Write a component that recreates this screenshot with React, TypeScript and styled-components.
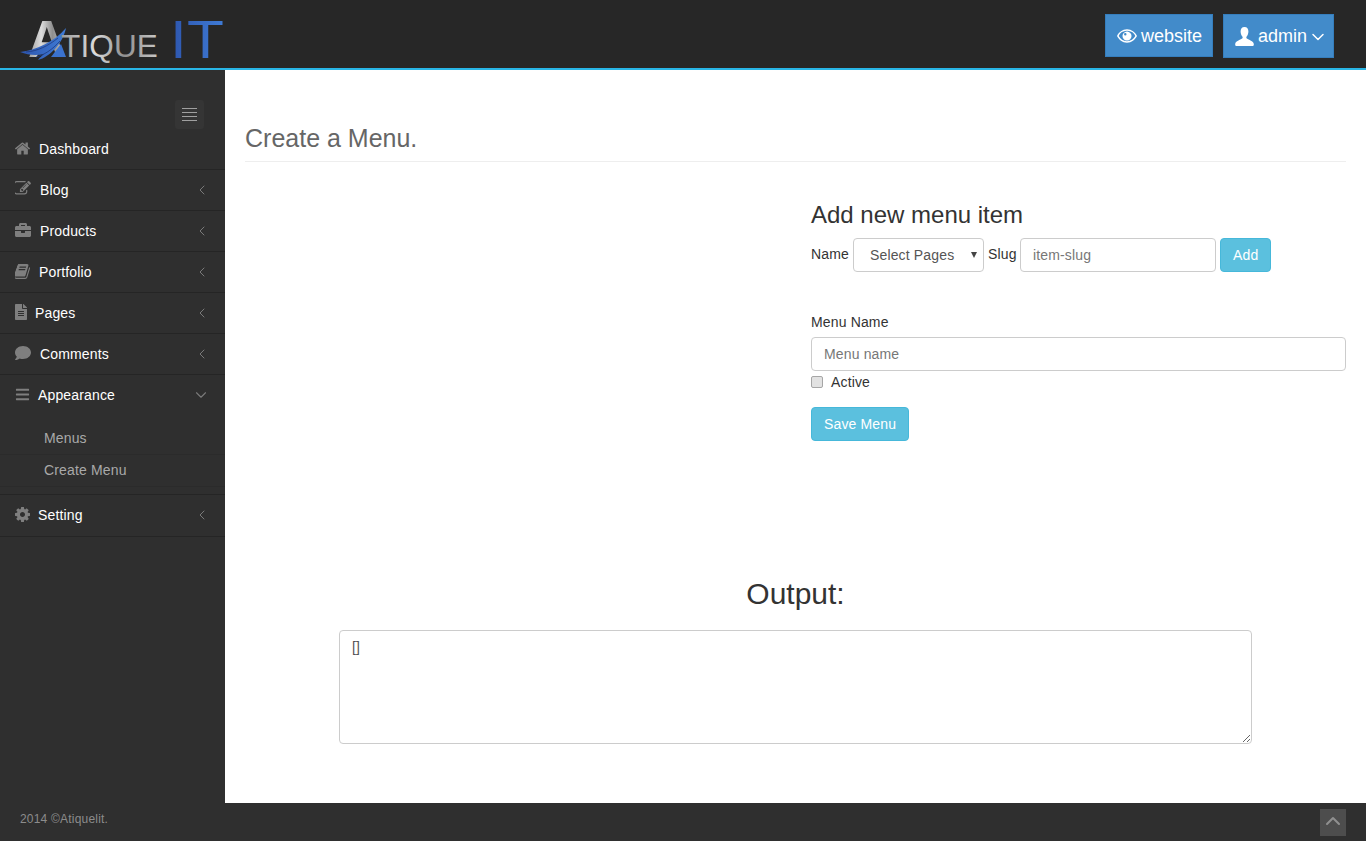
import React from "react";
import styled, { createGlobalStyle } from "styled-components";
import { FaBriefcase, FaFileAlt, FaComment, FaBars } from "react-icons/fa";
import { ChevronLeft, ChevronDown, ChevronUp } from "lucide-react";

const GlobalStyle = createGlobalStyle`
  html, body {
    margin: 0;
    padding: 0;
    background: #fff;
    font-family: "Liberation Sans", Arial, sans-serif;
    font-size: 14px;
    letter-spacing: 0.15px;
    color: #333;
  }
  * {
    box-sizing: border-box;
  }
`;

const Page = styled.div`
  display: flex;
  flex-direction: column;
  height: 841px;
  overflow: hidden;
`;

const Header = styled.header`
  flex: 0 0 70px;
  display: flex;
  justify-content: space-between;
  background: #272727;
  border-bottom: 2px solid #29b6e6;
  padding: 14px 32px 0 20px;
`;

const LogoSvg = styled.svg`
  display: block;
  margin-top: 5px;
  overflow: visible;
`;

const HeaderActions = styled.div`
  display: flex;
  align-items: flex-start;
  gap: 10px;
`;

const HeaderButton = styled.a<{ $w: number; $h: number }>`
  display: flex;
  align-items: center;
  gap: 4px;
  width: ${(p) => p.$w}px;
  height: ${(p) => p.$h}px;
  padding: 1px 0 0 11px;
  background: #428bca;
  border: 1px solid #357ebd;
  color: #fff;
  font-size: 18px;
  letter-spacing: 0;
`;

const AdminCaret = styled(ChevronDown)`
  margin-left: -3px;
`;

const Body = styled.div`
  flex: 1;
  display: flex;
  min-height: 0;
`;

const Sidebar = styled.aside`
  flex: 0 0 225px;
  background: #2f2f2f;
  padding-top: 30px;
`;

const ToggleRow = styled.div`
  display: flex;
  justify-content: flex-end;
  padding-right: 21px;
`;

const Toggle = styled.div`
  width: 29px;
  height: 29px;
  background: #353535;
  border-radius: 3px;
  display: flex;
  flex-direction: column;
  justify-content: center;
  align-items: center;
  gap: 3px;
  span {
    display: block;
    width: 15px;
    height: 1px;
    background: #a0a0a0;
  }
`;

const NavList = styled.ul`
  list-style: none;
  margin: 0;
  padding: 0;
`;

const NavItem = styled.li`
  border-bottom: 1px solid #252525;
  &:last-child {
    padding-bottom: 1px;
  }
`;

const NavRow = styled.div`
  height: 40px;
  display: flex;
  align-items: center;
  padding: 0 15px;
  color: #fff;
`;

const NavIcon = styled.span<{ $slot: number; $size: number }>`
  flex: 0 0 ${(p) => p.$slot}px;
  display: flex;
  align-items: center;
  color: #7f7f7f;
  font-size: ${(p) => p.$size}px;
  margin-top: -2px;
`;

const NavLabel = styled.span`
  flex: 1;
`;

const NavArrow = styled.span`
  display: flex;
  color: #7a7a7a;
`;

const SubList = styled.ul`
  list-style: none;
  margin: 0;
  padding: 8px 0 7px;
`;

const SubItem = styled.li`
  height: 32px;
  line-height: 31px;
  padding-left: 44px;
  color: #a9a9a9;
  border-bottom: 1px solid #2b2b2b;
`;

const Main = styled.main`
  flex: 1;
  background: #fff;
  padding: 20px 20px 0;
  min-width: 0;
`;

const PageTitle = styled.h3`
  margin: 33px 0 40px;
  height: 39px;
  font-size: 25px;
  line-height: 30px;
  font-weight: 400;
  letter-spacing: 0;
  color: #666;
  border-bottom: 1px solid #eee;
`;

const Columns = styled.div`
  display: grid;
  grid-template-columns: 1fr 1fr;
  column-gap: 30px;
  height: 375px;
`;

const FormColumn = styled.div`
  grid-column: 2;
  padding-left: 0.5px;
`;

const SectionTitle = styled.h3`
  margin: 0 0 10px;
  font-size: 24px;
  line-height: 26px;
  font-weight: 400;
  letter-spacing: 0;
  color: #333;
`;

const InlineForm = styled.div`
  display: flex;
  align-items: flex-start;
  gap: 4px;
  height: 74px;
`;

const InlineLabel = styled.label<{ $w: number }>`
  flex: 0 0 ${(p) => p.$w}px;
  min-width: 0;
  white-space: nowrap;
  line-height: 32px;
`;

const SelectWrap = styled.div`
  position: relative;
  width: 131px;
  height: 34px;
  &::after {
    content: "";
    position: absolute;
    right: 7px;
    top: 14px;
    border-left: 3px solid transparent;
    border-right: 3px solid transparent;
    border-top: 6px solid #444;
    pointer-events: none;
  }
`;

const Select = styled.select`
  appearance: none;
  display: block;
  width: 100%;
  height: 34px;
  padding: 6px 12px 6px 16px;
  font: inherit;
  letter-spacing: inherit;
  color: #555;
  background: #fff;
  border: 1px solid #ccc;
  border-radius: 4px;
`;

const Input = styled.input<{ $w?: number }>`
  display: block;
  width: ${(p) => (p.$w ? `${p.$w}px` : "100%")};
  height: 34px;
  padding: 6px 12px;
  font: inherit;
  letter-spacing: inherit;
  color: #555;
  background: #fff;
  border: 1px solid #ccc;
  border-radius: 4px;
  &::placeholder {
    color: #777;
  }
`;

const InfoButton = styled.button`
  height: 34px;
  padding: 6px 12px;
  font: inherit;
  letter-spacing: inherit;
  color: #fff;
  background: #5bc0de;
  border: 1px solid #46b8da;
  border-radius: 4px;
`;

const FieldLabel = styled.label`
  display: block;
  line-height: 20px;
  margin-bottom: 5px;
`;

const CheckRow = styled.label`
  display: flex;
  align-items: center;
  gap: 8px;
  height: 22px;
  margin-bottom: 14px;
`;

const CheckBox = styled.input`
  appearance: none;
  margin: 0;
  width: 12px;
  height: 12px;
  background: #e2e2e2;
  border: 1px solid #a6a6a6;
  border-radius: 2px;
`;

const OutputSection = styled.section`
  text-align: center;
`;

const OutputTitle = styled.h2`
  margin: 0 0 20px;
  font-size: 30px;
  line-height: 33px;
  font-weight: 400;
  letter-spacing: 0;
  color: #333;
`;

const OutputArea = styled.textarea`
  display: block;
  width: 913px;
  height: 114px;
  margin: 0 auto;
  padding: 6px 12px;
  font: inherit;
  line-height: 20px;
  color: #555;
  background: #fff;
  border: 1px solid #ccc;
  border-radius: 4px;
`;

const Footer = styled.footer`
  flex: 0 0 38px;
  display: flex;
  justify-content: space-between;
  align-items: flex-start;
  background: #2f2f2f;
  padding: 6px 20px 0;
  color: #8c8c8c;
  font-size: 12px;
  letter-spacing: 0.2px;
`;

const FooterText = styled.span`
  margin-top: 1px;
  line-height: 18px;
`;

const BackTop = styled.a`
  width: 26px;
  height: 27px;
  padding-bottom: 3px;
  display: flex;
  align-items: center;
  justify-content: center;
  background: #4d4d4d;
  color: #8f8f8f;
`;

function Logo() {
  return (
    <LogoSvg width="206" height="40" viewBox="0 0 206 40">
      <defs>
        <linearGradient id="silver" x1="0" y1="0" x2="1" y2="0">
          <stop offset="0" stopColor="#9a9a9a" />
          <stop offset="0.35" stopColor="#dcdcdc" />
          <stop offset="0.65" stopColor="#8f8f8f" />
          <stop offset="1" stopColor="#c8c8c8" />
        </linearGradient>
        <linearGradient id="logoBlue" x1="0" y1="0" x2="1" y2="0">
          <stop offset="0" stopColor="#2d55ad" />
          <stop offset="1" stopColor="#3f7bd6" />
        </linearGradient>
      </defs>
      <text x="8" y="38" fontFamily="Liberation Sans" fontWeight="700" fontSize="52" fill="url(#silver)">
        A
      </text>
      <path d="M0 33 C16 31 34 23 46 9 C43 24 30 38 18 41 C20 38 22 37 24 35 C16 37 8 36 0 33Z" fill="url(#logoBlue)" />
      <path d="M6 33 C18 32 28 27 38 19 M16 38 C24 36 32 31 40 22" fill="none" stroke="#1f3a7d" strokeWidth="0.8" />
      <path d="M31 38 L41 25 L46 38Z" fill="#3a72cf" />
      <text x="41" y="38" fontSize="32" fontFamily="Liberation Sans" textLength="97" lengthAdjust="spacingAndGlyphs" fill="url(#silver)">
        TIQUE
      </text>
      <text x="150" y="39" fontSize="53" fontFamily="Liberation Sans" textLength="54" lengthAdjust="spacingAndGlyphs" fill="url(#logoBlue)">
        IT
      </text>
    </LogoSvg>
  );
}

function EyeIcon() {
  return (
    <svg width="20" height="14" viewBox="0 0 21 14" fill="#fff" fillRule="evenodd">
      <path d="M10.500 0C5.600 0 2 3.200 0 7c2 3.800 5.600 7 10.500 7S19 10.800 21 7C19 3.200 15.400 0 10.500 0ZM10.500 1.500C7.600 1.500 5.400 2.500 3.900 3.800 3.300 4.300 2.700 5 1.800 7c1.700 3 4.700 5.500 8.700 5.500S17.500 10 19.200 7C18.300 5 17.700 4.300 17.100 3.800 15.600 2.500 13.400 1.500 10.500 1.500Z" />
      <path d="M10.500 2.300a4.700 4.700 0 1 0 .01 0ZM8.700 3.800a1.300 1.300 0 1 1-.01 2.600 1.300 1.300 0 0 1 .01-2.600Z" />
    </svg>
  );
}

function UserIcon() {
  return (
    <svg width="19" height="19" viewBox="0 0 19 19" fill="#fff">
      <path d="M9.500 0C6.800 0 5.600 2 5.600 4.600c0 2.200.8 4 1.900 5.100.3.600.2 1.400-.4 1.900C5.200 13.200.6 14 .2 17c-.1.800.2 2 .8 2h17c.6 0 .9-1.200.8-2-.4-3-5-3.800-6.900-5.400-.6-.5-.7-1.300-.4-1.900 1.100-1.100 1.900-2.900 1.900-5.100C13.400 2 12.200 0 9.500 0Z" />
    </svg>
  );
}

// Font Awesome 4 glyphs, the v5 ones in react-icons are drawn differently
function Fa4({ box, d }: { box: string; d: string }) {
  return (
    <svg width="1em" height="1em" viewBox={box} fill="currentColor">
      <path d={d} />
    </svg>
  );
}

const homePath =
  "M1472 992v480q0 26-19 45t-45 19h-384v-384h-256v384h-384q-26 0-45-19t-19-45v-480q0-1 .5-3t.5-3l575-474 575 474q1 2 1 6zm223-69l-62 74q-8 9-21 11h-3q-13 0-21-7l-692-577-692 577q-12 8-24 7-13-2-21-11l-62-74q-8-10-7-23.500t11-21.500l719-599q32-26 76-26t76 26l244 204v-195q0-14 9-23t23-9h192q14 0 23 9t9 23v408l219 182q10 8 11 21.500t-7 23.500z";
const editPath =
  "M888 1184l116-116-152-152-116 116v56h96v96h56zm440-720q-16-16-33 1l-350 350q-17 17-1 33t33-1l350-350q17-17 1-33zm80 594v190q0 119-84.500 203.500t-203.500 84.500h-832q-119 0-203.500-84.500t-84.500-203.500v-832q0-119 84.500-203.500t203.500-84.500h832q63 0 117 25 15 7 18 23 3 17-9 29l-49 49q-14 14-32 8-23-6-45-6h-832q-66 0-113 47t-47 113v832q0 66 47 113t113 47h832q66 0 113-47t47-113v-126q0-13 9-22l64-64q15-15 35-7t20 29zm-96-738l288 288-672 672h-288v-288zm444 132l-92 92-288-288 92-92q28-28 68-28t68 28l152 152q28 28 28 68t-28 68z";
const bookPath =
  "M1639 478q40 57 18 129l-275 906q-19 64-76.500 107.500t-122.500 43.500h-923q-77 0-148.500-53.500t-99.500-131.500q-24-67-2-127 0-4 3-27t4-37q1-8-3-21.500t-3-19.500q2-11 8-21t16.500-23.500 16.500-23.500q23-38 45-91.500t30-91.500q3-10 .5-30t-.5-28q3-11 17-28t17-23q21-36 42-92t25-90q1-9-2.500-32t.5-28q4-13 22-30.500t22-22.500q19-26 42.500-84.500t27.500-96.500q1-8-3-25.500t-2-26.500q2-8 9-18t18-23 17-21q8-12 16.500-30.500t15-35 16-36 19.500-32 26.500-23.500 36-11.500 47.500 5.500l-1 3q38-9 51-9h761q74 0 114 56t18 130l-274 906q-36 119-71.500 153.500t-128.500 34.500h-869q-27 0-38 15-11 16-1 43 24 70 144 70h923q29 0 56-15.500t35-41.500l300-987q7-22 5-57 38 15 59 43zm-1064 2q-4 13 2 22.500t20 9.500h608q13 0 25.500-9.500t16.500-22.500l21-64q4-13-2-22.500t-20-9.500h-608q-13 0-25.500 9.500t-16.500 22.500zm-83 256q-4 13 2 22.500t20 9.500h608q13 0 25.500-9.500t16.500-22.500l21-64q4-13-2-22.500t-20-9.500h-608q-13 0-25.500 9.500t-16.500 22.500z";
const cogPath =
  "M1152 896q0-106-75-181t-181-75-181 75-75 181 75 181 181 75 181-75 75-181zm512-109v222q0 12-8 23t-20 13l-185 28q-19 54-39 91 35 50 107 138 10 12 10 25t-9 23q-27 37-99 108t-94 71q-12 0-26-9l-138-108q-44 23-91 38-16 136-29 186-7 28-36 28h-222q-14 0-24.500-8.500t-11.500-21.500l-28-184q-49-16-90-37l-141 107q-10 9-25 9-14 0-25-11-126-114-165-168-7-10-7-23 0-12 8-23 15-21 51-66.500t54-70.500q-27-50-41-99l-183-27q-13-2-21-12.500t-8-23.500v-222q0-12 8-23t19-13l186-28q14-46 39-92-40-57-107-138-10-12-10-24 0-10 9-23 26-36 98.500-107.500t94.500-71.500q13 0 26 10l138 107q44-23 91-38 16-136 29-186 7-28 36-28h222q14 0 24.500 8.500t11.500 21.500l28 184q49 16 90 37l142-107q9-9 24-9 13 0 25 10 129 119 165 170 7 8 7 22 0 12-8 23-15 21-51 66.500t-54 70.500q26 50 41 98l183 28q13 2 21 12.500t8 23.500z";

const items = [
  { label: "Dashboard", icon: <Fa4 box="90 100 1610 1610" d={homePath} />, slot: 24, size: 15 },
  { label: "Blog", icon: <Fa4 box="128 128 1664 1664" d={editPath} />, slot: 25, size: 16, arrow: true },
  { label: "Products", icon: <FaBriefcase />, slot: 25, size: 16, arrow: true },
  { label: "Portfolio", icon: <Fa4 box="128 128 1536 1536" d={bookPath} />, slot: 24, size: 15, arrow: true },
  { label: "Pages", icon: <FaFileAlt preserveAspectRatio="xMinYMid" />, slot: 20, size: 16, arrow: true },
  { label: "Comments", icon: <FaComment />, slot: 25, size: 16, arrow: true },
  { label: "Appearance", icon: <FaBars />, slot: 23, size: 15, open: true, children: ["Menus", "Create Menu"] },
  { label: "Setting", icon: <Fa4 box="128 128 1536 1536" d={cogPath} />, slot: 23, size: 15, arrow: true },
];

export default function App() {
  return (
    <Page>
      <GlobalStyle />
      <Header>
        <Logo />
        <HeaderActions>
          <HeaderButton $w={108} $h={43}>
            <EyeIcon />
            website
          </HeaderButton>
          <HeaderButton $w={111} $h={44}>
            <UserIcon />
            admin
            <AdminCaret size={20} strokeWidth={1.8} />
          </HeaderButton>
        </HeaderActions>
      </Header>
      <Body>
        <Sidebar>
          <ToggleRow>
            <Toggle>
              <span />
              <span />
              <span />
              <span />
            </Toggle>
          </ToggleRow>
          <NavList>
            {items.map((item) => (
              <NavItem key={item.label}>
                <NavRow>
                  <NavIcon $slot={item.slot} $size={item.size}>
                    {item.icon}
                  </NavIcon>
                  <NavLabel>{item.label}</NavLabel>
                  {item.arrow && (
                    <NavArrow>
                      <ChevronLeft size={16} strokeWidth={1.5} />
                    </NavArrow>
                  )}
                  {item.open && (
                    <NavArrow>
                      <ChevronDown size={18} strokeWidth={1.5} />
                    </NavArrow>
                  )}
                </NavRow>
                {item.children && (
                  <SubList>
                    {item.children.map((c) => (
                      <SubItem key={c}>{c}</SubItem>
                    ))}
                  </SubList>
                )}
              </NavItem>
            ))}
          </NavList>
        </Sidebar>
        <Main>
          <PageTitle>Create a Menu.</PageTitle>
          <Columns>
            <FormColumn>
              <SectionTitle>Add new menu item</SectionTitle>
              <InlineForm>
                <InlineLabel $w={38}>Name</InlineLabel>
                <SelectWrap>
                  <Select defaultValue="">
                    <option value="">Select Pages</option>
                  </Select>
                </SelectWrap>
                <InlineLabel $w={28}>Slug</InlineLabel>
                <Input $w={196} placeholder="item-slug" />
                <InfoButton>Add</InfoButton>
              </InlineForm>
              <FieldLabel>Menu Name</FieldLabel>
              <Input placeholder="Menu name" />
              <CheckRow>
                <CheckBox type="checkbox" />
                Active
              </CheckRow>
              <InfoButton>Save Menu</InfoButton>
            </FormColumn>
          </Columns>
          <OutputSection>
            <OutputTitle>Output:</OutputTitle>
            <OutputArea defaultValue="[]" />
          </OutputSection>
        </Main>
      </Body>
      <Footer>
        <FooterText>2014 ©Atiquelit.</FooterText>
        <BackTop>
          <ChevronUp size={24} strokeWidth={2} />
        </BackTop>
      </Footer>
    </Page>
  );
}
